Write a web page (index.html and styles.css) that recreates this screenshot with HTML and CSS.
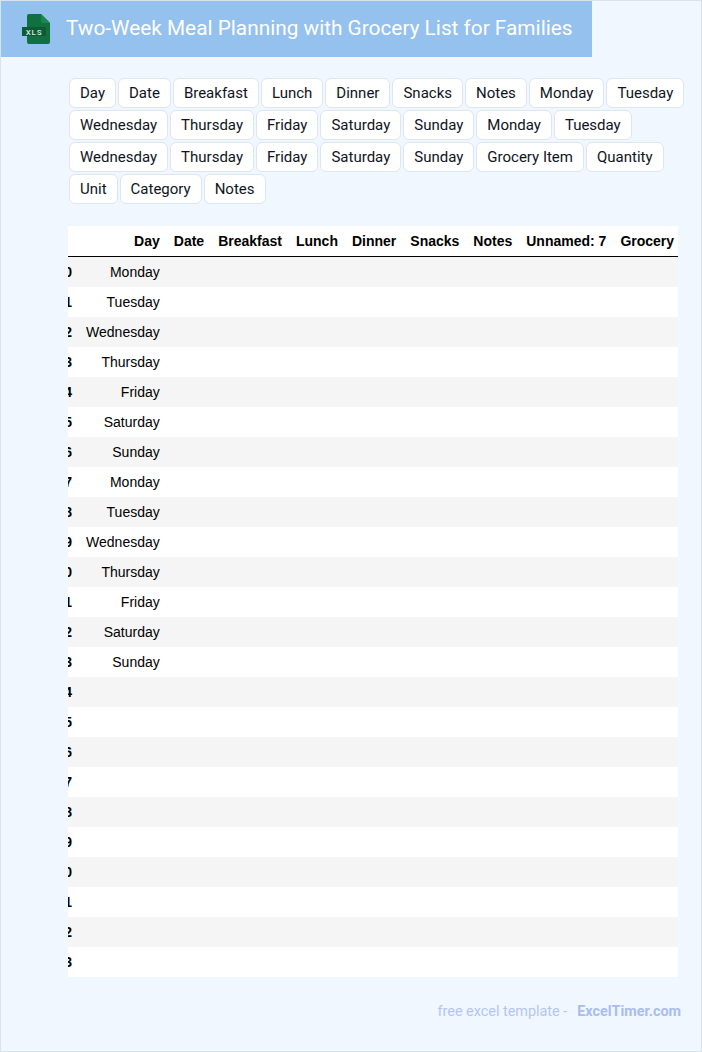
FILE: index.html
```html
<!DOCTYPE html>
<html lang="en">
<head>
<meta charset="utf-8">
<title>Two-Week Meal Planning with Grocery List for Families</title>
<link rel="stylesheet" href="styles.css">
</head>
<body>
<div class="page">
  <header class="banner">
    <svg class="logo" width="32" height="34" viewBox="0 0 32 34" aria-hidden="true">
      <path class="logo-doc" d="M7 3Q7 1 9 1H21L30 10V29Q30 31 28 31H9Q7 31 7 29Z"/>
      <path class="logo-fold" d="M21 1L30 10H23Q21 10 21 8Z"/>
      <rect class="logo-band" x="2" y="14" width="24" height="9"/>
      <text class="logo-text" x="14" y="21.500" text-anchor="middle">XLS</text>
    </svg>
    <h1 class="title">Two-Week Meal Planning with Grocery List for Families</h1>
  </header>
  <ul class="tags">
    <li class="tag">Day</li><li class="tag">Date</li><li class="tag">Breakfast</li><li class="tag">Lunch</li><li class="tag">Dinner</li><li class="tag">Snacks</li><li class="tag">Notes</li><li class="tag">Monday</li><li class="tag">Tuesday</li><li class="tag">Wednesday</li><li class="tag">Thursday</li><li class="tag">Friday</li><li class="tag">Saturday</li><li class="tag">Sunday</li><li class="tag">Monday</li><li class="tag">Tuesday</li><li class="tag">Wednesday</li><li class="tag">Thursday</li><li class="tag">Friday</li><li class="tag">Saturday</li><li class="tag">Sunday</li><li class="tag">Grocery Item</li><li class="tag">Quantity</li><li class="tag">Unit</li><li class="tag">Category</li><li class="tag">Notes</li>
  </ul>
  <div class="table-wrap">
    <table class="sheet">
      <thead>
        <tr><th></th><th>Day</th><th>Date</th><th>Breakfast</th><th>Lunch</th><th>Dinner</th><th>Snacks</th><th>Notes</th><th>Unnamed: 7</th><th>Grocery</th></tr>
      </thead>
      <tbody>
        <tr><th>0</th><td>Monday</td><td></td><td></td><td></td><td></td><td></td><td></td><td></td><td></td></tr>
        <tr><th>1</th><td>Tuesday</td><td></td><td></td><td></td><td></td><td></td><td></td><td></td><td></td></tr>
        <tr><th>2</th><td>Wednesday</td><td></td><td></td><td></td><td></td><td></td><td></td><td></td><td></td></tr>
        <tr><th>3</th><td>Thursday</td><td></td><td></td><td></td><td></td><td></td><td></td><td></td><td></td></tr>
        <tr><th>4</th><td>Friday</td><td></td><td></td><td></td><td></td><td></td><td></td><td></td><td></td></tr>
        <tr><th>5</th><td>Saturday</td><td></td><td></td><td></td><td></td><td></td><td></td><td></td><td></td></tr>
        <tr><th>6</th><td>Sunday</td><td></td><td></td><td></td><td></td><td></td><td></td><td></td><td></td></tr>
        <tr><th>7</th><td>Monday</td><td></td><td></td><td></td><td></td><td></td><td></td><td></td><td></td></tr>
        <tr><th>8</th><td>Tuesday</td><td></td><td></td><td></td><td></td><td></td><td></td><td></td><td></td></tr>
        <tr><th>9</th><td>Wednesday</td><td></td><td></td><td></td><td></td><td></td><td></td><td></td><td></td></tr>
        <tr><th>10</th><td>Thursday</td><td></td><td></td><td></td><td></td><td></td><td></td><td></td><td></td></tr>
        <tr><th>11</th><td>Friday</td><td></td><td></td><td></td><td></td><td></td><td></td><td></td><td></td></tr>
        <tr><th>12</th><td>Saturday</td><td></td><td></td><td></td><td></td><td></td><td></td><td></td><td></td></tr>
        <tr><th>13</th><td>Sunday</td><td></td><td></td><td></td><td></td><td></td><td></td><td></td><td></td></tr>
        <tr><th>14</th><td></td><td></td><td></td><td></td><td></td><td></td><td></td><td></td><td></td></tr>
        <tr><th>15</th><td></td><td></td><td></td><td></td><td></td><td></td><td></td><td></td><td></td></tr>
        <tr><th>16</th><td></td><td></td><td></td><td></td><td></td><td></td><td></td><td></td><td></td></tr>
        <tr><th>17</th><td></td><td></td><td></td><td></td><td></td><td></td><td></td><td></td><td></td></tr>
        <tr><th>18</th><td></td><td></td><td></td><td></td><td></td><td></td><td></td><td></td><td></td></tr>
        <tr><th>19</th><td></td><td></td><td></td><td></td><td></td><td></td><td></td><td></td><td></td></tr>
        <tr><th>20</th><td></td><td></td><td></td><td></td><td></td><td></td><td></td><td></td><td></td></tr>
        <tr><th>21</th><td></td><td></td><td></td><td></td><td></td><td></td><td></td><td></td><td></td></tr>
        <tr><th>22</th><td></td><td></td><td></td><td></td><td></td><td></td><td></td><td></td><td></td></tr>
        <tr><th>23</th><td></td><td></td><td></td><td></td><td></td><td></td><td></td><td></td><td></td></tr>
      </tbody>
    </table>
  </div>
  <footer class="credit"><span>free excel template -</span><a class="credit-link" href="#">ExcelTimer.com</a></footer>
</div>
</body>
</html>
```
FILE: styles.css
```css
* { box-sizing: border-box; }
html, body { margin: 0; padding: 0; }
body { background: #f0f7ff; }
.page {
  width: 702px;
  height: 1052px;
  background: #f0f7ff;
  border: 1px solid #d9e3ee;
  overflow: hidden;
  font-family: Roboto, sans-serif;
}
.banner {
  width: 591px;
  height: 56px;
  background: #94c1ee;
  display: flex;
  align-items: center;
  padding-left: 19px;
  gap: 14px;
}
.logo { flex: none; display: block; margin-top: 2px; }
.logo-doc { fill: #107040; }
.logo-fold { fill: #1c8552; }
.logo-band { fill: #0d5a37; }
.logo-text { fill: #dcebe2; font: 500 8px Roboto, sans-serif; letter-spacing: 0.8px; }
.title {
  margin: -2px 0 0;
  font-size: 20.8px;
  font-weight: 400;
  line-height: 24px;
  color: #fff;
  white-space: nowrap;
}
.tags {
  list-style: none;
  margin: 21px 0 0 68px;
  padding: 0;
  width: 622px;
  display: flex;
  flex-wrap: wrap;
  gap: 2px;
}
.tag {
  height: 30px;
  padding: 0 10px;
  background: #fff;
  border: 1px solid #dde6f2;
  border-radius: 6px;
  font-size: 15px;
  line-height: 28px;
  color: #10141c;
  white-space: nowrap;
}
.table-wrap {
  width: 610px;
  margin: 22px 0 0 67px;
  overflow: hidden;
  background: #fff;
}
.sheet {
  margin-left: -18.500px;
  border-collapse: collapse;
  border-spacing: 0;
  font-family: "Liberation Sans", Arial, sans-serif;
  font-size: 14px;
  line-height: 16px;
  color: #000;
  white-space: nowrap;
}
.sheet th, .sheet td {
  height: 30px;
  padding: 7px;
  text-align: right;
}
.sheet th { font-weight: 700; }
.sheet thead th { border-bottom: 1px solid #000; }
.sheet tbody tr:nth-child(odd) { background: #f5f5f5; }
.sheet tbody tr:nth-child(even) { background: #fff; }
.credit {
  margin: 25px 20px 0 0;
  display: flex;
  justify-content: flex-end;
  gap: 10px;
  font-size: 14.400px;
  line-height: 20px;
  color: #b4c5f2;
}
.credit-link {
  font-weight: 700;
  color: #a9bdf0;
  text-decoration: none;
}
```
